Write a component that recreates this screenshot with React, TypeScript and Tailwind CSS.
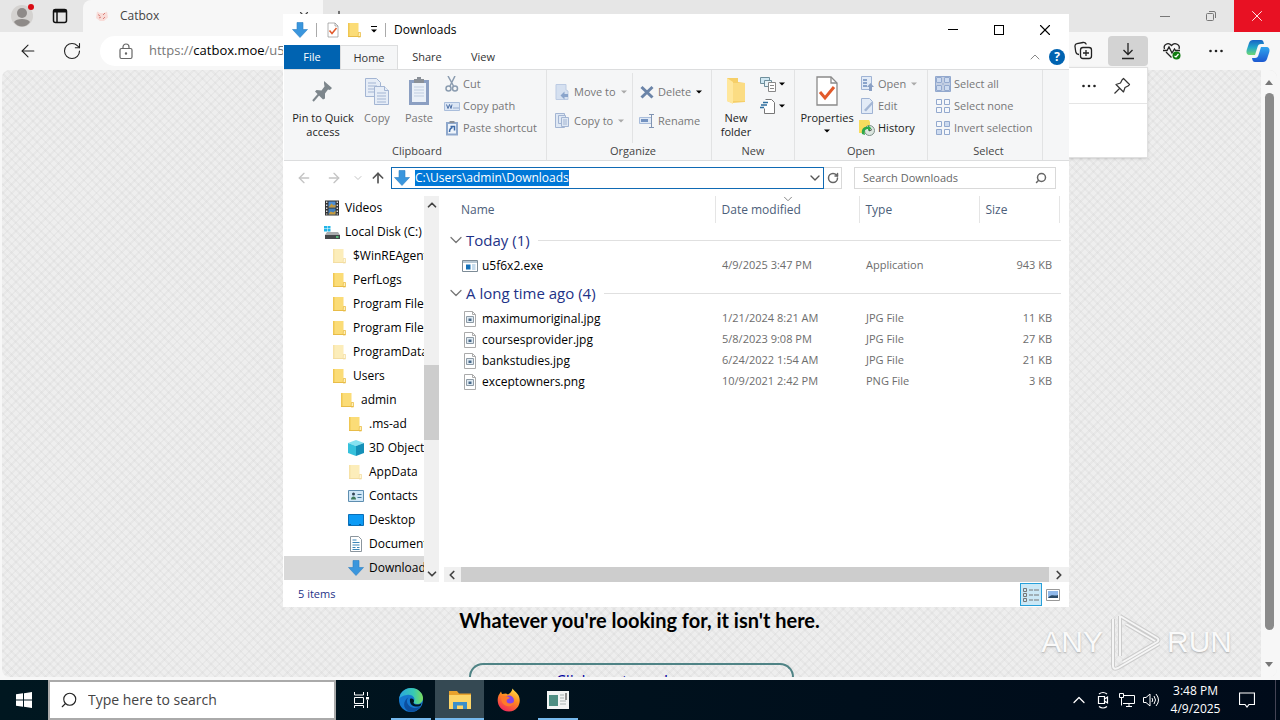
import type { ReactNode } from 'react'
import { clsx } from 'clsx'
import { ArrowLeft, ArrowRight, ArrowUp, ChevronDown, ChevronUp, ChevronLeft, ChevronRight, Plus, RotateCw, Search, X } from 'lucide-react'

type IconProps = { className?: string }

/* ---------- icons ---------- */

function DownArrowIcon({ className = 'size-4' }: IconProps) {
  return (
    <svg viewBox="0 0 16 16" className={className}>
      <path d="M5 .5h6v7h4.5L8 15.5.5 7.5H5z" fill="#3a96dd" stroke="#2b7fc4" strokeWidth=".6" />
    </svg>
  )
}

function FolderIcon({ className = 'size-4' }: IconProps) {
  return (
    <svg viewBox="0 0 16 16" className={className}>
      <path d="M1 1h10.500v9l2 .5V15H1z" fill="#fbdc77" />
      <path d="M1 1h1.500v14H1z" fill="#f0c752" />
      <path d="M11.500 10.500h2v4.500H11z" fill="#fff0b8" stroke="#e8bc48" strokeWidth=".7" />
      <path d="M1 14.500h12" stroke="#e8bc48" />
    </svg>
  )
}

function BigFolderIcon() {
  return (
    <svg viewBox="0 0 20 28" className="h-7 w-5">
      <path d="M1 1h11v4l7 1v19l-13 1-5-2z" fill="#f6cf68" />
      <path d="m1 1 6 4v22l-6-3z" fill="#ffe79c" />
      <path d="M7 6h12v18H7z" fill="#fbdc83" />
    </svg>
  )
}

function CheckDocIcon({ className }: IconProps) {
  return (
    <svg viewBox="0 0 24 32" className={className} fill="none">
      <path d="M2 2h14l6 6v22H2z" fill="#fff" stroke="#8a8a8a" strokeWidth="1.300" />
      <path d="M16 2v6h6" stroke="#8a8a8a" strokeWidth="1.300" />
      <path d="m5 17 5 6 9-11" stroke="#e25a2b" strokeWidth="3" />
    </svg>
  )
}

function Caret({ className = 'text-black' }: IconProps) {
  return (
    <svg viewBox="0 0 6 4" className={clsx('h-1 w-1.5 shrink-0', className)}>
      <path d="M0 .5h6L3 3.500z" fill="currentColor" />
    </svg>
  )
}

function PinIcon() {
  return (
    <svg viewBox="0 0 24 24" className="size-6">
      <path d="m13 2 8 7-2 2-2-.5-3 4v5l-2 1-8-8 1.500-1.500 5 .5 3-4-.5-3z" fill="#7d868c" />
      <path d="m8 15-6 7" stroke="#7d868c" strokeWidth="2" />
    </svg>
  )
}

function CopyIcon({ className = 'size-7' }: IconProps) {
  return (
    <svg viewBox="0 0 28 28" className={className} fill="#e6edf7" stroke="#a3b5d3">
      <path d="M2.500 1.500h11l4 4v14h-15z" />
      <path d="M5 6h8M5 9h9M5 12h9M5 15h9" />
      <path d="M11.500 9.500h10l4 4v14h-14z" />
      <path d="M21.500 9.500v4h4M14 16h9M14 19h9M14 22h9M14 25h9" />
    </svg>
  )
}

function PasteIcon() {
  return (
    <svg viewBox="0 0 24 30" className="h-[30px] w-6">
      <path d="M2 4h20v25H2z" fill="#8b9fc2" />
      <path d="M5 7h14v19H5z" fill="#eaf0f8" />
      <path d="M7 11h10M7 14h10M7 17h10M7 20h10" stroke="#c0cde0" />
      <path d="M7 3h3V1h4v2h3v4H7z" fill="#8a9098" />
    </svg>
  )
}

function CutIcon() {
  return (
    <svg viewBox="0 0 16 16" className="size-4" fill="none" stroke="#8b9cb0" strokeWidth="1.500">
      <path d="m4 0 5.500 10M11 0 6 10" />
      <circle cx="4.500" cy="12.500" r="2.500" />
      <circle cx="11" cy="12.500" r="2.500" />
    </svg>
  )
}

function CopyPathIcon() {
  return (
    <svg viewBox="0 0 16 16" className="size-4">
      <path d="M.5 4.500h15v8H.5z" fill="#dbe6f5" stroke="#a9bddb" />
      <path d="m2.500 6.500 1.500 4 1.500-4 1.500 4 1-4" stroke="#4b6ea5" fill="none" />
      <path d="M9.500 10h1M11.500 10h1M13.500 10h1" stroke="#4b6ea5" />
    </svg>
  )
}

function PasteShortcutIcon() {
  return (
    <svg viewBox="0 0 16 16" className="size-4">
      <path d="M2 2h12v13.500H2z" fill="#8fa8cc" />
      <path d="M4 4h8v9.500H4z" fill="#eef4fb" />
      <path d="M5.500 12c0-3 1-4 3-4.500M6.500 6.500h4v4" stroke="#3d6aa8" strokeWidth="1.500" fill="none" />
      <path d="M5.500 1h5v2h-5z" fill="#8a9098" />
    </svg>
  )
}

function MoveIcon() {
  return (
    <svg viewBox="0 0 16 16" className="size-4">
      <path d="M1 .5h10V6l2 1v8.500H1z" fill="#d5e0f0" stroke="#bccbe3" />
      <path d="M13 10H9.500V7.500l-4 4 4 4V13H13z" fill="#8aa4cb" />
    </svg>
  )
}

function SmallCopyIcon() {
  return (
    <svg viewBox="0 0 16 16" className="size-4" fill="#dfe8f4" stroke="#a3b5d3">
      <path d="M.5.5h9v14h-9z" />
      <path d="M3.500 2.500h7v8h-7z" />
      <path d="M6.500 4.500h7v9h-7zM8 7h4M8 9h4M8 11h4" />
    </svg>
  )
}

function DeleteIcon() {
  return (
    <svg viewBox="0 0 16 16" className="size-4">
      <path d="m2.500 3 11 10.500M13.500 3l-11 10.500" stroke="#6b84a8" strokeWidth="3" />
    </svg>
  )
}

function RenameIcon() {
  return (
    <svg viewBox="0 0 16 16" className="size-4" fill="none">
      <path d="M.5 4.500h12v6H.5z" fill="#dfe9f6" stroke="#a9bddb" />
      <path d="M2 7.500h7" stroke="#7493c1" strokeWidth="3" />
      <path d="M12.500 1.500v13M10 1.500h5M10 14.500h5" stroke="#7f93b2" />
    </svg>
  )
}

function NewItemIcon() {
  return (
    <svg viewBox="0 0 16 16" className="size-4" fill="#fff" stroke="#6f8f9c">
      <path d="M.5 1.500h9v6h-9z" fill="#cfe7f2" />
      <path d="M4.500 4.500h7v6h-7z" fill="#e8f3f7" />
      <path d="M8.500 6.500h7v9h-7zM10 9.500h4M10 12.500h4" stroke="#888" />
    </svg>
  )
}

function EasyAccessIcon() {
  return (
    <svg viewBox="0 0 16 16" className="size-4" fill="none">
      <path d="M5.500 1.500h6l3 3v11h-10v-5" fill="#fff" stroke="#777" />
      <path d="M3 4.500h5M1 7h6M0 9.500h4" stroke="#2f6f9f" strokeWidth="1.300" />
    </svg>
  )
}

function OpenIcon() {
  return (
    <svg viewBox="0 0 16 16" className="size-4">
      <path d="M2.500.5h10v13h-10z" fill="#e2ebf7" stroke="#9fb3d4" />
      <path d="M4 3h4v2H4zM4 6h4v2H4zM4 9h4v2H4z" fill="#8aa4cb" />
      <path d="m11.500 7 3.500 4h-2v4h-3v-4H8z" fill="#8aa0c4" />
    </svg>
  )
}

function EditIcon() {
  return (
    <svg viewBox="0 0 16 16" className="size-4">
      <path d="M2.500.5h8l3 3v12h-11z" fill="#e2ebf7" stroke="#9fb3d4" />
      <path d="m5 12 8-8.500 1.500 1.500-7.500 8.500z" fill="#a3b6d5" />
    </svg>
  )
}

function HistoryIcon() {
  return (
    <svg viewBox="0 0 16 16" className="size-4">
      <path d="M0 0h10l1 2v11H0z" fill="#f7dc5e" />
      <circle cx="10.500" cy="10.500" r="5" fill="#dce6e0" stroke="#7d8f88" />
      <path d="M10.500 8v3l2.500-1.500" stroke="#555" fill="none" />
      <path d="M3 14c-1-5 2-8 6-7V5l3.500 3.500L9 11V9c-3 0-4 2-3 6z" fill="#2fa84c" />
    </svg>
  )
}

function SelectIcon({ kind }: { kind: 'all' | 'none' | 'invert' }) {
  const on = '#cddbf0'
  const off = '#f5f8fc'
  const first = kind === 'all' ? on : off
  const second = kind === 'none' ? off : on
  return (
    <svg viewBox="0 0 16 16" className="size-4" stroke="#93a9ce">
      <path d="M1.500 1.500h5v5h-5z" fill={first} />
      <path d="M9.500 1.500h5v5h-5z" fill={second} />
      <path d="M1.500 9.500h5v5h-5z" fill={second} />
      <path d="M9.500 9.500h5v5h-5z" fill={first} />
      {kind === 'all' && <path d="M.5.500h15v15H.5zM8 1v14M1 8h14" fill="none" />}
    </svg>
  )
}

function VideosIcon() {
  return (
    <svg viewBox="0 0 16 16" className="size-4">
      <path d="M1 .5h14v15H1z" fill="#333" />
      <path d="M4.500 1.500h7v6h-7z" fill="#4d8fd6" />
      <path d="M4.500 8.500h7v6h-7z" fill="#3f7fc0" />
      <path d="m4.500 7.500 3-4 2 2 2-1v3zM4.500 14.500l2-3 3 1 2-2v4z" fill="#c79a3b" />
      <path d="M2.700 1.500v13M13.300 1.500v13" stroke="#ddd" strokeWidth="1.400" strokeDasharray="1.500 1.500" />
    </svg>
  )
}

function DiskIcon() {
  return (
    <svg viewBox="0 0 16 16" className="size-4">
      <path d="M0 2h3v2.500H0zM3.500 2h3v2.500h-3zM0 5h3v2.500H0zM3.500 5h3v2.500h-3z" fill="#23b5e8" />
      <path d="M3 8h11l2 3H1z" fill="#a9abad" />
      <path d="M1 11h15v4H1z" fill="#45484b" />
      <path d="M12 13h2.500" stroke="#5fe08a" strokeWidth="1.500" />
    </svg>
  )
}

function CubeIcon() {
  return (
    <svg viewBox="0 0 16 16" className="size-4">
      <path d="m8 0 8 3-8 3-8-3z" fill="#86e2f1" />
      <path d="m0 3 8 3v10l-8-3z" fill="#35c1dc" />
      <path d="m16 3-8 3v10l8-3z" fill="#1590b8" />
    </svg>
  )
}

function ContactsIcon() {
  return (
    <svg viewBox="0 0 16 16" className="size-4">
      <path d="M.5 2.500h15v11H.5z" fill="#cfe7f8" stroke="#5e8eb0" />
      <circle cx="5.500" cy="6" r="1.500" fill="#345" />
      <path d="M3 11.500c0-4 5-4 5 0z" fill="#3f7a5b" />
      <path d="M9.500 6.500h4M9.500 9.500h4" stroke="#45789d" />
    </svg>
  )
}

function DesktopIcon() {
  return (
    <svg viewBox="0 0 16 16" className="size-4">
      <path d="M.5 2.500h15v11H.5z" fill="#0c9bf5" stroke="#0a6fb8" />
      <path d="M1 12.500h14" stroke="#0a5c9c" strokeDasharray="2 8" />
    </svg>
  )
}

function DocumentsIcon() {
  return (
    <svg viewBox="0 0 16 16" className="size-4">
      <path d="M2.500.5h8l3 3v12h-11z" fill="#fff" stroke="#8b959d" />
      <path d="M4.500 4h4M4.500 6.500h7M4.500 9h7M4.500 11.500h3M9 11.500h2.500M4.500 13.500h7" stroke="#3c86b8" />
    </svg>
  )
}

function ExeIcon() {
  return (
    <svg viewBox="0 0 16 16" className="size-4">
      <path d="M.5 2.500h15v11H.5z" fill="#fff" stroke="#7c8b96" />
      <path d="M1 4h14" stroke="#b7c7d3" strokeWidth="2" />
      <path d="M4 6.500h4.500v5H4z" fill="#1470b8" />
      <path d="M10 7h3.500M10 9h3.500M10 11h3.500" stroke="#8cb7d8" />
    </svg>
  )
}

function ImageFileIcon() {
  return (
    <svg viewBox="0 0 16 16" className="size-4">
      <path d="M2.500.5h8l3 3v12h-11z" fill="#fff" stroke="#aaa" />
      <path d="M10.500.5v3h3" fill="none" stroke="#aaa" />
      <path d="M4.500 5.500h7v6h-7z" fill="#dfeaf2" stroke="#8d9aa5" />
      <path d="M6.500 7.500h3v2.500h-3z" fill="#4a6a8a" />
    </svg>
  )
}

function DownloadIcon() {
  return (
    <svg viewBox="0 0 16 18" className="h-[18px] w-4" fill="none" stroke="#222" strokeWidth="1.300">
      <path d="M8 1v11M3.500 8 8 12.500 12.500 8M2 16.500h12" />
    </svg>
  )
}

function CollectionsIcon() {
  return (
    <svg viewBox="0 0 20 20" className="size-5" fill="none" stroke="#222" strokeWidth="1.300">
      <path d="M5 13.500c-2 0-3-1-3.300-3L1 5.500C.8 4 1.600 3 3 2.700l6-1.200c1.500-.3 3 .5 3.200 2" />
      <rect x="6.500" y="6.500" width="11" height="11" rx="2.500" />
      <path d="M12 9v6M9 12h6" />
    </svg>
  )
}

function HeartIcon() {
  return (
    <svg viewBox="0 0 20 20" className="size-5" fill="none" stroke="#222" strokeWidth="1.300">
      <path d="M2.500 8C1 4 6 .5 9.500 4.500 13 .5 18.500 4 17 8M4 11l5.500 5.500" />
      <path d="M1 9.500h4L7 6l3 6 2.500-4 1 1.500H18" />
      <circle cx="14.500" cy="14.500" r="4" fill="#107c10" stroke="none" />
      <path d="m12.500 15 1.500 1 2.500-3" stroke="#fff" />
    </svg>
  )
}

function Dots() {
  return (
    <svg viewBox="0 0 16 4" className="h-1 w-4" fill="#222">
      <circle cx="2.500" cy="2" r="1.300" />
      <circle cx="8" cy="2" r="1.300" />
      <circle cx="13.500" cy="2" r="1.300" />
    </svg>
  )
}

function CopilotIcon() {
  return (
    <svg viewBox="0 0 24 24" className="size-6">
      <defs>
        <linearGradient id="cpA" x1="0" y1="0" x2="0" y2="1">
          <stop offset="0" stopColor="#1763c6" />
          <stop offset=".5" stopColor="#22a7c9" />
          <stop offset="1" stopColor="#6fd873" />
        </linearGradient>
        <linearGradient id="cpB" x1="0" y1="0" x2="0" y2="1">
          <stop offset="0" stopColor="#2fa5ee" />
          <stop offset="1" stopColor="#1c58d0" />
        </linearGradient>
      </defs>
      <path d="M7 1h8c2 0 2.500 1.500 3 4h-3c-2 0-3 1-3.500 3L9 16H4c-3 0-4-2-3.300-5L3 4c.7-2 2-3 4-3z" fill="url(#cpA)" />
      <path d="M17 23H9c-2 0-2.500-1.500-3-4h3c2 0 3-1 3.500-3L15 8h5c3 0 4 2 3.300 5L21 20c-.7 2-2 3-4 3z" fill="url(#cpB)" />
    </svg>
  )
}

function PushpinOutline() {
  return (
    <svg viewBox="0 0 18 18" className="size-[18px]" fill="none" stroke="#333" strokeWidth="1.200" strokeLinejoin="round">
      <path d="m10.500 1.500 6 6-1.500 1.500-3 1.500-1.500 4.500L3 7.500l4.500-1.500L9 3zM6.500 11.500l-5 5" />
    </svg>
  )
}

function EdgeIcon() {
  return (
    <svg viewBox="0 0 24 24" className="size-6">
      <defs>
        <linearGradient id="edgeTop" x1="0" y1="0" x2="1" y2="0">
          <stop offset="0" stopColor="#2aa6df" />
          <stop offset=".6" stopColor="#37c9b4" />
          <stop offset="1" stopColor="#7bdc5b" />
        </linearGradient>
      </defs>
      <circle cx="12" cy="12" r="12" fill="#1577cf" />
      <path d="M.2 11C1 4 6 0 12 0c7 0 12 5 12 10 0 4-3 6-6 6-2.500 0-4-1-3-2.500C17 9 12 6 8 7c-4 .5-7 2-7.800 4z" fill="url(#edgeTop)" />
      <path d="M10 9c-4 3-2 10 5 11 3 .4 6-1 7-2-3 5-8 6.500-12 5.500C4 21 3 13 10 9z" fill="#0c4f9f" />
      <path d="M11 11c2-1 4 0 4 2 0 1-.8 1.500-.5 2 1 2 6 2 8 0l-.8 2.500c-2 2-12 2-10.700-6.500z" fill="#001522" />
    </svg>
  )
}

function TaskbarFolderIcon() {
  return (
    <svg viewBox="0 0 24 20" className="h-5 w-6">
      <path d="M1 1h8l2 2.500h12V8H1z" fill="#e8a22c" />
      <path d="M1 5h22v14H1z" fill="#fcd568" />
      <path d="M5 19v-7h14v7h-4v-3.500H9V19z" fill="#3b8fc9" />
    </svg>
  )
}

function FirefoxIcon() {
  return (
    <svg viewBox="0 0 24 24" className="size-6">
      <defs>
        <linearGradient id="ff" x1=".8" y1="0" x2=".3" y2="1">
          <stop offset="0" stopColor="#ffe14a" />
          <stop offset=".45" stopColor="#ff8a1f" />
          <stop offset="1" stopColor="#f2275c" />
        </linearGradient>
      </defs>
      <path d="M15.500.5c1 2 3 3 5 5.500 4.500 5 2.500 17-8.500 17.500C2 23.500-1 14 1.500 7.500L4 3.500l1 2.500 4-.5 2 1c2-1 4-3 4.500-6z" fill="url(#ff)" />
      <circle cx="12" cy="12.500" r="5" fill="#8545e8" />
      <path d="M4 9c3-2 7-1 9 1l-3 1.500c-1 2 0 4 3 4 2 0 3-1 4-2-.5 4-4 5.500-7 4.500C5.500 17 4 13 4 9z" fill="#ff7a2a" />
    </svg>
  )
}

function AppIcon() {
  return (
    <svg viewBox="0 0 22 18" className="h-[18px] w-[22px]">
      <path d="M0 0h22v18H0z" fill="#f3f5f5" />
      <path d="M2 4h9v11H2z" fill="#4f8f84" />
      <path d="M13 4h4M13 7h4M13 10h6M13 13h6" stroke="#a9b3b3" />
      <path d="M19 2v7" stroke="#333" />
    </svg>
  )
}

/* ---------- explorer window ---------- */

function SmallCommand({ icon, label, caret, enabled }: { icon: ReactNode; label: string; caret?: boolean | 'dark'; enabled?: boolean }) {
  return (
    <button className={clsx('flex h-[22px] items-center gap-[3px] whitespace-nowrap', enabled ? 'text-[#222]' : 'text-[#777]')}>
      {icon}
      {label}
      {caret && <Caret className={clsx(label && 'ml-0.5', caret === 'dark' ? 'text-black' : 'text-[#aaa]')} />}
    </button>
  )
}

function BigCommand({ icon, label, className }: { icon: ReactNode; label: ReactNode; className: string }) {
  return (
    <button className={clsx('flex flex-col items-center gap-1 pt-0.5 leading-[14px]', className)}>
      <span className="flex h-8 items-center">{icon}</span>
      <span>{label}</span>
    </button>
  )
}

function RibbonGroup({ title, className, children }: { title: string; className: string; children: ReactNode }) {
  return (
    <section className={clsx('flex shrink-0 flex-col border-r border-[#e2e3e4] pt-[3px]', className)}>
      <div className="flex h-[70px]">{children}</div>
      <h2 className="text-center leading-4 text-[#444]">{title}</h2>
    </section>
  )
}

function Ribbon() {
  return (
    <div className="flex h-[92px] border-y border-[#dcddde] bg-[#f5f6f7] text-[11px]">
      <RibbonGroup title="Clipboard" className="w-[263px] pl-1">
        <BigCommand icon={<PinIcon />} label={<>Pin to Quick<br />access</>} className="w-[70px] text-[#222]" />
        <BigCommand icon={<CopyIcon />} label="Copy" className="w-[38px] text-[#777]" />
        <BigCommand icon={<PasteIcon />} label="Paste" className="w-[46px] text-[#777]" />
        <div className="pl-0.5">
          <SmallCommand icon={<CutIcon />} label="Cut" />
          <SmallCommand icon={<CopyPathIcon />} label="Copy path" />
          <SmallCommand icon={<PasteShortcutIcon />} label="Paste shortcut" />
        </div>
      </RibbonGroup>
      <RibbonGroup title="Organize" className="w-[165px] pl-2">
        <div className="flex w-[78px] flex-col gap-[7px] border-r border-[#e2e3e4] pt-2">
          <SmallCommand icon={<MoveIcon />} label="Move to" caret />
          <SmallCommand icon={<SmallCopyIcon />} label="Copy to" caret />
        </div>
        <div className="flex flex-col gap-[7px] pt-2 pl-1.5">
          <SmallCommand icon={<DeleteIcon />} label="Delete" caret="dark" />
          <SmallCommand icon={<RenameIcon />} label="Rename" />
        </div>
      </RibbonGroup>
      <RibbonGroup title="New" className="w-[83px]">
        <BigCommand icon={<BigFolderIcon />} label={<>New<br />folder</>} className="w-12 text-[#222]" />
        <div>
          <SmallCommand icon={<NewItemIcon />} label="" caret="dark" />
          <SmallCommand icon={<EasyAccessIcon />} label="" caret="dark" />
        </div>
      </RibbonGroup>
      <RibbonGroup title="Open" className="w-[133px]">
        <BigCommand
          icon={<CheckDocIcon className="h-8 w-6" />}
          label={<span className="flex flex-col items-center gap-1">Properties<Caret /></span>}
          className="w-16 text-[#222]"
        />
        <div>
          <SmallCommand icon={<OpenIcon />} label="Open" caret />
          <SmallCommand icon={<EditIcon />} label="Edit" />
          <SmallCommand icon={<HistoryIcon />} label="History" enabled />
        </div>
      </RibbonGroup>
      <RibbonGroup title="Select" className="w-[115px] pl-[7px]">
        <div>
          <SmallCommand icon={<SelectIcon kind="all" />} label="Select all" />
          <SmallCommand icon={<SelectIcon kind="none" />} label="Select none" />
          <SmallCommand icon={<SelectIcon kind="invert" />} label="Invert selection" />
        </div>
      </RibbonGroup>
    </div>
  )
}

const indents = ['pl-10', 'pl-12', 'pl-14', 'pl-16']

const tree: { label: string; level: number; icon?: ReactNode; faded?: boolean; selected?: boolean }[] = [
  { label: 'Videos', level: 0, icon: <VideosIcon /> },
  { label: 'Local Disk (C:)', level: 0, icon: <DiskIcon /> },
  { label: '$WinREAgent', level: 1, faded: true },
  { label: 'PerfLogs', level: 1 },
  { label: 'Program Files', level: 1 },
  { label: 'Program Files (x86)', level: 1 },
  { label: 'ProgramData', level: 1, faded: true },
  { label: 'Users', level: 1 },
  { label: 'admin', level: 2 },
  { label: '.ms-ad', level: 3 },
  { label: '3D Objects', level: 3, icon: <CubeIcon /> },
  { label: 'AppData', level: 3, faded: true },
  { label: 'Contacts', level: 3, icon: <ContactsIcon /> },
  { label: 'Desktop', level: 3, icon: <DesktopIcon /> },
  { label: 'Documents', level: 3, icon: <DocumentsIcon /> },
  { label: 'Downloads', level: 3, icon: <DownArrowIcon />, selected: true },
]

function TreePane() {
  return (
    <nav className="w-[140px] shrink-0 overflow-hidden">
      {tree.map((item, i) => (
        <a
          key={i}
          href="#"
          className={clsx('flex h-6 items-center gap-[5px] whitespace-nowrap text-black', indents[item.level], item.selected && 'bg-[#d9d9d9]')}
        >
          <span className={clsx('shrink-0', item.faded && 'opacity-50')}>{item.icon ?? <FolderIcon />}</span>
          {item.label}
        </a>
      ))}
    </nav>
  )
}

const groups = [
  {
    title: 'Today (1)',
    files: [{ name: 'u5f6x2.exe', date: '4/9/2025 3:47 PM', type: 'Application', size: '943 KB' }],
  },
  {
    title: 'A long time ago (4)',
    files: [
      { name: 'maximumoriginal.jpg', date: '1/21/2024 8:21 AM', type: 'JPG File', size: '11 KB' },
      { name: 'coursesprovider.jpg', date: '5/8/2023 9:08 PM', type: 'JPG File', size: '27 KB' },
      { name: 'bankstudies.jpg', date: '6/24/2022 1:54 AM', type: 'JPG File', size: '21 KB' },
      { name: 'exceptowners.png', date: '10/9/2021 2:42 PM', type: 'PNG File', size: '3 KB' },
    ],
  },
]

function FileTable() {
  return (
    <table className="w-full table-fixed">
      <colgroup>
        <col />
        <col className="w-36" />
        <col className="w-[120px]" />
        <col className="w-20" />
        <col className="w-2.5" />
      </colgroup>
      <thead>
        <tr className="h-[27px] text-left text-[#4c607a]">
          <th className="border-r border-[#e5e5e5] pl-[17px] font-normal">Name</th>
          <th className="relative border-r border-[#e5e5e5] pl-1.5 font-normal">
            Date modified
            <ChevronDown className="absolute -top-1 left-[65px] size-3.5 text-[#777]" strokeWidth={1.500} />
          </th>
          <th className="border-r border-[#e5e5e5] pl-1.5 font-normal">Type</th>
          <th className="border-r border-[#e5e5e5] pl-1.5 font-normal">Size</th>
          <th />
        </tr>
      </thead>
      {groups.map((group) => (
        <tbody key={group.title}>
          <tr className="h-8">
            <th colSpan={5} className="pt-0.5 pr-2 pl-0.5 font-normal">
              <div className="flex items-center text-[15px] leading-5 whitespace-nowrap text-[#1e3287]">
                <ChevronDown className="size-5 text-[#777]" strokeWidth={1.500} />
                {group.title}
                <span className="ml-2 h-px flex-1 bg-[#e0e0e0]" />
              </div>
            </th>
          </tr>
          {group.files.map((file) => (
            <tr key={file.name} className="h-[21px] text-[11px] text-[#6d6d6d]">
              <td className="pl-[18px]">
                <div className="flex items-center gap-1 text-xs text-black">
                  {file.name.endsWith('.exe') ? <ExeIcon /> : <ImageFileIcon />}
                  {file.name}
                </div>
              </td>
              <td className="pl-[7px]">{file.date}</td>
              <td className="pl-[7px]">{file.type}</td>
              <td className="pr-[7px] text-right">{file.size}</td>
              <td />
            </tr>
          ))}
        </tbody>
      ))}
    </table>
  )
}

function ExplorerWindow() {
  return (
    <main className="absolute top-3.5 right-[211px] bottom-[113px] left-[283px] z-10 flex flex-col bg-white pl-px text-xs">
      <header className="flex h-[31px] items-center pr-px pl-2">
        <DownArrowIcon />
        <span className="mx-2 h-3.5 w-px bg-[#aaa]" />
        <button aria-label="Properties"><CheckDocIcon className="h-4 w-4" /></button>
        <button aria-label="New folder" className="ml-1.5"><FolderIcon /></button>
        <button aria-label="Customize" className="ml-2 flex flex-col items-center gap-0.5">
          <span className="h-px w-1.5 bg-black" />
          <Caret />
        </button>
        <span className="mx-2 h-3.5 w-px bg-[#aaa]" />
        <h1 className="flex-1 text-black">Downloads</h1>
        <button aria-label="Minimize" className="flex w-[46px] justify-center"><span className="h-px w-2.5 bg-black" /></button>
        <button aria-label="Maximize" className="flex w-[46px] justify-center"><span className="size-2.5 border border-black" /></button>
        <button aria-label="Close" className="flex w-[46px] justify-center"><X className="size-[18px]" strokeWidth={1.500} /></button>
      </header>

      <div className="flex h-6 items-center text-[11px] text-[#333]">
        <button className="h-full w-14 bg-[#0063b1] text-white">File</button>
        <button className="-mb-px h-[25px] w-[58px] border border-b-0 border-[#dcddde] bg-[#f5f6f7]">Home</button>
        <button className="w-[58px]">Share</button>
        <button className="w-[54px]">View</button>
        <button aria-label="Collapse ribbon" className="ml-auto text-[#888]"><ChevronUp className="size-4" strokeWidth={1.500} /></button>
        <button aria-label="Help" className="mx-1 ml-1.5 size-4 rounded-full bg-[#0063b1] text-xs leading-4 font-bold text-white">?</button>
      </div>

      <Ribbon />

      <div className="flex items-center pt-1.5 pr-[13px]">
        <div className="flex w-[107px] items-center pl-3 text-[#c4c4c4]">
          <button aria-label="Back"><ArrowLeft className="size-4" /></button>
          <button aria-label="Forward" className="ml-3.5"><ArrowRight className="size-4" /></button>
          <button aria-label="Recent" className="ml-2.5"><ChevronDown className="size-3" /></button>
          <button aria-label="Up" className="ml-1.5 text-[#555]"><ArrowUp className="size-4" strokeWidth={2.500} /></button>
        </div>
        <div className="flex h-[22px] flex-1 items-center border border-[#0f6ab4] pl-0.5">
          <DownArrowIcon />
          <input
            aria-label="Address"
            defaultValue="C:\Users\admin\Downloads"
            autoFocus
            onFocus={(e) => e.currentTarget.select()}
            className="ml-[5px] min-w-0 flex-1 bg-transparent leading-4 outline-none selection:bg-[#0078d7] selection:text-white"
          />
          <button aria-label="Previous locations" className="text-[#555]"><ChevronDown className="size-4" /></button>
        </div>
        <button aria-label="Refresh" className="flex h-[22px] w-[18px] items-center justify-center border border-l-0 border-[#d9d9d9] text-[#666]">
          <RotateCw className="size-3" strokeWidth={3} />
        </button>
        <div className="ml-3 flex h-[22px] w-[202px] items-center border border-[#d9d9d9] px-2 text-[#666]">
          <input aria-label="Search Downloads" placeholder="Search Downloads" className="min-w-0 flex-1 text-[11px] outline-none placeholder:text-[#666]" />
          <Search className="size-3 -scale-x-100" strokeWidth={3} />
        </div>
      </div>

      <div className="flex min-h-0 flex-1 pt-[7px]">
        <TreePane />
        <div className="flex w-[15px] shrink-0 flex-col items-center bg-[#f0f0f0] text-[#444]">
          <ChevronUp className="my-0.5 size-3.5 shrink-0" strokeWidth={3} />
          <div className="flex-[150]" />
          <div className="w-full flex-[75] bg-[#cdcdcd]" />
          <div className="flex-[125]" />
          <ChevronDown className="my-px size-3.5 shrink-0" strokeWidth={3} />
        </div>
        <div className="ml-[5px] flex min-w-0 flex-1 flex-col justify-between">
          <FileTable />
          <div className="flex h-[15px] items-center bg-[#f0f0f0] text-[#444]">
            <ChevronLeft className="mr-0.5 ml-px size-3.5" strokeWidth={3} />
            <div className="h-full flex-1 bg-[#cdcdcd]" />
            <ChevronRight className="mx-[3px] size-3.5" strokeWidth={3} />
          </div>
        </div>
      </div>

      <footer className="flex h-[25px] items-center pr-[9px] pl-3.5 text-[11px] text-[#1e3287]">
        <span className="flex-1">5 items</span>
        <button aria-label="Details view" className="flex h-[23px] w-[22px] items-center justify-center border border-[#26a0da] bg-[#cbe8f6]">
          <svg viewBox="0 0 16 14" className="h-3.5 w-4" fill="none" stroke="#777">
            <path d="M.5.5h3v3h-3zM.5 5.500h3v3h-3zM.5 10.500h3v3h-3zM6 2h4M11 2h5M6 7h4M11 7h5M6 12h4M11 12h5" />
          </svg>
        </button>
        <button aria-label="Large icons view" className="ml-1">
          <svg viewBox="0 0 14 12" className="h-3 w-3.5">
            <path d="M.5.5h13v11H.5z" fill="#fff" stroke="#999" />
            <path d="M2 2h10v7H2z" fill="#8fb8ea" />
            <path d="M2 9c4-5 7-1 10-3v3z" fill="#2b4a66" />
          </svg>
        </button>
      </footer>
    </main>
  )
}

/* ---------- browser ---------- */

function Browser() {
  return (
    <div className="flex min-h-0 flex-1 flex-col bg-[#f7f7f7]">
      <header className="flex h-8 items-stretch bg-[#e6e6e6]">
        <button aria-label="Profile" className="relative ml-2.5 self-center">
          <svg viewBox="0 0 24 24" className="size-6">
            <circle cx="12" cy="12" r="11" fill="#d4d2d0" />
            <circle cx="12" cy="9" r="5" fill="#8e8a88" />
            <path d="M4 18c2-4 14-4 16 0-4 6-12 6-16 0z" fill="#8e8a88" />
          </svg>
          <span className="absolute top-0 right-0 size-1.5 rounded-full bg-[#d90b14]" />
        </button>
        <button aria-label="Tab actions" className="mr-[15px] ml-[18px]">
          <svg viewBox="0 0 16 16" className="size-4" fill="none" stroke="#111" strokeWidth="1.500">
            <rect x="1.500" y="1.500" width="13" height="13" rx="2" />
            <path d="M1.500 3h13" strokeWidth="3" />
            <path d="M5 4v11" />
          </svg>
        </button>
        <div className="flex w-60 items-center rounded-tl-lg bg-[#f7f7f7] px-3 text-xs text-[#444]">
          <svg viewBox="0 0 14 14" className="mr-[11px] size-3.5">
            <path d="M2 2.500 5 4h4l3-1.500 1 6L9 12H5L1 9z" fill="#f8dcd8" />
            <path d="M3 5.500 5 7M8 6l2-2M4 9l2-1M8 10l2-2" stroke="#d9807a" />
          </svg>
          <span className="flex-1">Catbox</span>
          <X className="size-3.5" />
        </div>
        <button aria-label="New tab" className="px-2"><Plus className="size-4" strokeWidth={1.500} /></button>
        <div className="ml-auto flex text-[#777]">
          <button aria-label="Minimize" className="flex w-[46px] items-center justify-center"><span className="h-px w-2.5 bg-[#777]" /></button>
          <button aria-label="Restore" className="flex w-[46px] items-center justify-center">
            <svg viewBox="0 0 10 10" className="size-2.5" fill="none" stroke="currentColor">
              <rect x=".5" y="2.500" width="7" height="7" rx="1" />
              <path d="M3 .5h5q1.500 0 1.500 1.500v5" />
            </svg>
          </button>
          <button aria-label="Close" className="flex w-[46px] items-center justify-center bg-[#e81123] text-white"><X className="size-[18px]" strokeWidth={1.200} /></button>
        </div>
      </header>

      <div className="flex h-[38px] items-center pr-2.5 pl-[18px] text-[#222]">
        <button aria-label="Back"><ArrowLeft className="size-5" strokeWidth={1.300} /></button>
        <button aria-label="Reload" className="ml-6"><RotateCw className="size-5" strokeWidth={1.300} /></button>
        <div className="mr-5 ml-[18px] flex h-[30px] flex-1 items-center rounded-full bg-white pl-[19px] text-[13px]">
          <svg viewBox="0 0 14 17" className="mr-4 h-[17px] w-3.5" fill="none" stroke="#666" strokeWidth="1.200">
            <rect x="1" y="5.500" width="12" height="10" rx="1.500" />
            <path d="M4 5.500V4a3 3 0 0 1 6 0v1.500" />
            <circle cx="7" cy="10.500" r=".6" fill="#666" />
          </svg>
          <div role="textbox" aria-label="Address bar" contentEditable suppressContentEditableWarning className="text-[#777]">
            https://<span className="text-black">catbox.moe</span>/u5f6x2.exe
          </div>
        </div>
        <button aria-label="Collections" className="mr-3.5"><CollectionsIcon /></button>
        <button aria-label="Downloads" className="flex h-[30px] w-10 items-center justify-center rounded bg-[#d3d3d3]"><DownloadIcon /></button>
        <button aria-label="Browser essentials" className="ml-3.5"><HeartIcon /></button>
        <button aria-label="More" className="mr-[22px] ml-[26px]"><Dots /></button>
        <button aria-label="Copilot"><CopilotIcon /></button>
      </div>

      <div className="mr-[3px] mb-[3px] ml-[2px] flex min-h-0 flex-1 overflow-hidden rounded-lg bg-[#eeeeee] bg-[repeating-linear-gradient(45deg,#00000007_0_2px,transparent_2px_6px),repeating-linear-gradient(-45deg,#00000007_0_2px,transparent_2px_6px)]">
        <div className="flex flex-1 flex-col items-center justify-end">
          <p className="mb-[29px] pl-4 font-['Lato',sans-serif] text-xl font-bold text-black">
            Whatever you're looking for, it isn't here.
          </p>
          <div className="h-3.5 w-[325px] shrink-0 overflow-hidden rounded-t-2xl border-2 border-b-0 border-[#4f8385] pt-1 text-center">
            <a href="#" className="text-base leading-6 text-[#0000a0]">Click me to go home</a>
          </div>
        </div>
        <div className="flex w-4 flex-col items-center gap-2 bg-[#f7f7f7] py-2.5">
          <svg viewBox="0 0 8 5" className="h-[5px] w-2"><path d="M4 0l4 5H0z" fill="#777" /></svg>
          <div className="w-[9px] flex-1 rounded-full bg-[#8a8a8a]" />
          <svg viewBox="0 0 8 5" className="mt-6 h-[5px] w-2"><path d="M4 5l4-5H0z" fill="#777" /></svg>
        </div>
      </div>

      {/* downloads flyout */}
      <aside className="absolute top-[67px] right-[132px] flex h-[91px] w-[360px] flex-col border border-[#e0e0e0] bg-white shadow-sm">
        <div className="flex h-9 items-center justify-end gap-4 border-b border-[#e5e5e5] pr-4">
          <button aria-label="More options"><Dots /></button>
          <button aria-label="Pin"><PushpinOutline /></button>
        </div>
      </aside>
    </div>
  )
}

function Watermark() {
  return (
    <div className="absolute right-12 bottom-12 flex items-center gap-1 font-['Liberation_Sans',sans-serif] text-3xl leading-[60px] text-[#fafafa] [text-shadow:0_1px_2px_#aaa]">
      ANY
      <svg viewBox="0 0 56 60" className="h-[60px] w-14" fill="none" strokeLinejoin="round">
        <path d="M6 7v47q0 4 5 2l41-24M13 4v40M13 4l37 22q3 2 0 4L16 50M19 12l29 17" stroke="#ccc" strokeWidth="4" />
        <path d="M6 7v47q0 4 5 2l41-24M13 4v40M13 4l37 22q3 2 0 4L16 50M19 12l29 17" stroke="#f6f6f6" strokeWidth="2" />
      </svg>
      RUN
    </div>
  )
}

/* ---------- taskbar ---------- */

function TaskButton({ label, active, running, children }: { label: string; active?: boolean; running?: boolean; children: ReactNode }) {
  return (
    <button aria-label={label} className={clsx('flex w-[49px] flex-col items-center', active && 'bg-[#354953]')}>
      <span className="flex flex-1 items-center pt-0.5">{children}</span>
      <span className={clsx('h-0.5', active ? 'w-full' : 'w-10', running && 'bg-[#76b9ed]')} />
    </button>
  )
}

function Taskbar() {
  return (
    <footer className="flex h-10 shrink-0 items-stretch bg-linear-to-r from-[#001720] to-[#000b1a] text-white">
      <button aria-label="Start" className="flex w-12 items-center justify-center">
        <svg viewBox="0 0 16 16" className="size-4" fill="#fff">
          <path d="M0 2.300 7 1.300v6.200H0zM8 1.200 16 0v7.500H8zM0 8.500h7v6.200l-7-1zM8 8.500h8V16l-8-1.200z" />
        </svg>
      </button>
      <label className="mr-px flex w-[288px] items-center gap-2.5 border-2 border-[#aaa] bg-white pl-2.5 text-[#222]">
        <Search className="size-[18px] -scale-x-100" strokeWidth={1.500} />
        <input placeholder="Type here to search" className="min-w-0 flex-1 text-sm outline-none placeholder:text-[#444]" />
      </label>
      <TaskButton label="Task View">
        <svg viewBox="0 0 17 16" className="h-4 w-[17px]" fill="none" stroke="#fff">
          <path d="M1.500 0v3h9V0M1.500 5.500h9v6h-9zM1.500 16v-2.500h9V16M14.500 0v4M14.500 8v8" />
          <path d="M13 5h3v2.500h-3z" fill="#fff" stroke="none" />
        </svg>
      </TaskButton>
      <TaskButton label="Microsoft Edge" running><EdgeIcon /></TaskButton>
      <TaskButton label="File Explorer" active running><TaskbarFolderIcon /></TaskButton>
      <TaskButton label="Firefox"><FirefoxIcon /></TaskButton>
      <TaskButton label="u5f6x2" running><AppIcon /></TaskButton>

      <div className="ml-auto flex items-center text-xs">
        <button aria-label="Show hidden icons"><ChevronUp className="size-5" strokeWidth={1.500} /></button>
        <button aria-label="Meet now" className="ml-1.5">
          <svg viewBox="0 0 16 18" className="h-[18px] w-4" fill="none" stroke="#fff" strokeWidth="1.200">
            <path d="M3.500 5.500h6v7h-6zM9.500 8l3-2v6l-3-2M4 3q4-3 8 0M4 15.500q4 3 8 0" />
          </svg>
        </button>
        <button aria-label="Network" className="ml-2">
          <svg viewBox="0 0 16 16" className="size-4" fill="none" stroke="#fff">
            <path d="M5 3.500h10.500v8H4M.5 1.500h4v4h-4zM2.500 5.500v8M10 11.500v3M7 14.500h6" />
          </svg>
        </button>
        <button aria-label="Volume" className="ml-2">
          <svg viewBox="0 0 17 16" className="h-4 w-[17px]" fill="none" stroke="#fff">
            <path d="M.5 5.500H3l4-3.500v12l-4-3.500H.5zM9 6q1.500 2 0 4M11 4q3 4 0 8M13 2q5 6 0 12" />
          </svg>
        </button>
        <button className="w-[71px] text-center leading-[18px]">
          3:48 PM<br />4/9/2025
        </button>
        <button aria-label="Notifications" className="ml-2 w-4">
          <svg viewBox="0 0 16 16" className="size-4" fill="none" stroke="#fff" strokeWidth="1.200">
            <path d="M.5 1h15v11.500H10L8 15l-2-2.500H.5z" />
          </svg>
        </button>
        <span className="ml-5 h-full w-px bg-[#445]" />
        <span className="w-1" />
      </div>
    </footer>
  )
}

export default function App() {
  return (
    <div className="relative flex h-screen flex-col overflow-hidden font-['Open_Sans','Noto_Sans',sans-serif]">
      <Browser />
      <Watermark />
      <ExplorerWindow />
      <Taskbar />
    </div>
  )
}
